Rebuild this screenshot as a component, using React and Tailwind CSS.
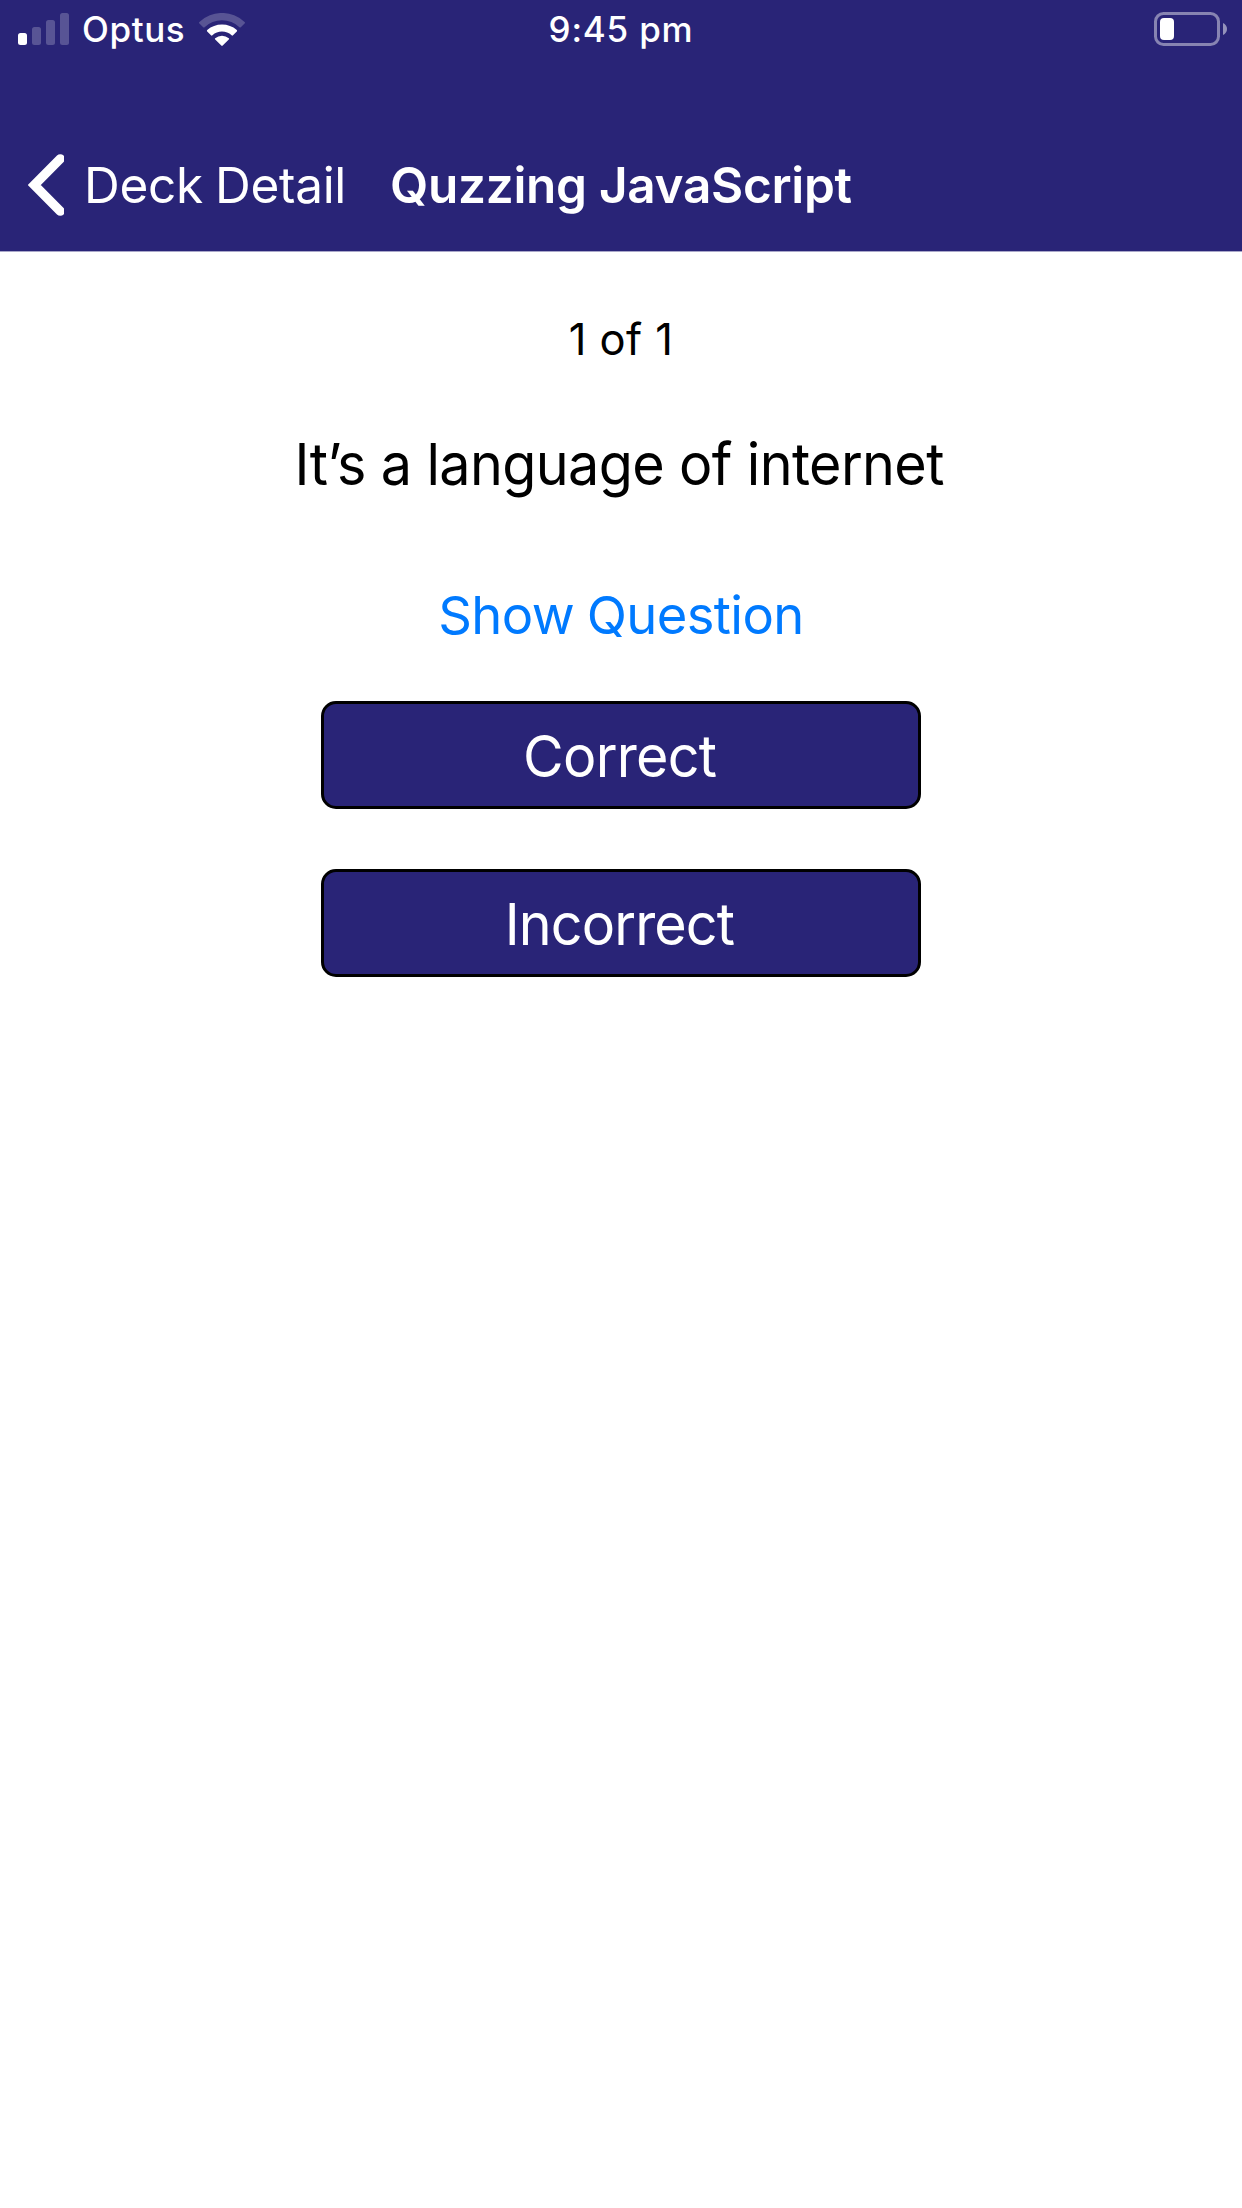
import React from "react";

function SignalIcon() {
  return (
    <svg className="h-8 w-[51px]" viewBox="0 0 51 32" fill="#fff">
      <rect x="0" y="20" width="9" height="12" rx="2.5" />
      <g opacity="0.22">
        <rect x="14" y="14" width="9" height="18" rx="2.5" />
        <rect x="28" y="7" width="9" height="25" rx="2.5" />
        <rect x="42" y="0" width="9" height="32" rx="2.5" />
      </g>
    </svg>
  );
}

function WifiIcon() {
  return (
    <svg className="h-[33px] w-[46px]" viewBox="0 0 46 33" fill="#fff">
      <path
        opacity="0.22"
        d="M0.4 10.6a1.2 1.2 0 0 1 0-1.7A33 33 0 0 1 45.6 8.9a1.2 1.2 0 0 1 0 1.7L41.8 14.2a1 1 0 0 1-1.4 0A25.5 25.5 0 0 0 5.6 14.2a1 1 0 0 1-1.4 0Z"
      />
      <path d="M8.2 18.4a1 1 0 0 1 0-1.4A22.5 22.5 0 0 1 37.8 17a1 1 0 0 1 0 1.4L34 22.3a1 1 0 0 1-1.4 0A14.2 14.2 0 0 0 13.4 22.3a1 1 0 0 1-1.4 0Z" />
      <path d="M16.2 26.5a.9 .9 0 0 1 0-1.3A10.5 10.5 0 0 1 29.8 25.2a.9 .9 0 0 1 0 1.3L23.7 32.6a1 1 0 0 1-1.4 0Z" />
    </svg>
  );
}

function BatteryIcon() {
  return (
    <svg className="h-[34px] w-[73px]" viewBox="0 0 73 34" fill="none">
      <rect x="1.5" y="1.5" width="63" height="31" rx="8" stroke="#fff" strokeOpacity="0.44" strokeWidth="3" />
      <rect x="6" y="6" width="14" height="22" rx="4" fill="#fff" />
      <path d="M69 11c2.5 1.2 4 3.3 4 6s-1.5 4.8-4 6Z" fill="#fff" fillOpacity="0.5" />
    </svg>
  );
}

function BackIcon() {
  return (
    <svg className="h-[62px] w-9" viewBox="0 0 36 62" fill="none">
      <path d="M32.3 4.8L6.3 31L32.3 57.2" stroke="#fff" strokeWidth="9.3" strokeLinecap="round" />
    </svg>
  );
}

function AnswerButton({ children }) {
  return (
    <button className="flex h-[108px] w-[600px] items-center justify-center rounded-[15px] border-[3px] border-black bg-[#292477] pt-[2px] pr-[3px] text-[58px] leading-none text-white">
      {children}
    </button>
  );
}

export default function App() {
  return (
    <div className="flex min-h-[2208px] w-[1242px] flex-col overflow-hidden bg-white font-[Inter,sans-serif] text-black">
      <header className="h-[252px] border-b border-[#a9a7c9] bg-[#292477] text-white">
        <div className="grid h-[58px] grid-cols-3 items-center text-[35px] leading-[58px] font-medium">
          <div className="flex items-center pl-[18px]">
            <SignalIcon />
            <span className="ml-[13px] tracking-[0.6px]">Optus</span>
            <span className="ml-[13.5px]">
              <WifiIcon />
            </span>
          </div>
          <div className="text-center tracking-[0.8px]">9:45 pm</div>
          <div className="flex justify-end pr-[15px]">
            <BatteryIcon />
          </div>
        </div>
        <nav className="mt-[63px] flex h-[128px] items-center pl-7 text-[49.5px] leading-none">
          <button className="flex items-center">
            <BackIcon />
            <span className="ml-5 pt-[2px] whitespace-nowrap tracking-[-0.3px] [word-spacing:-1.4px]">Deck Detail</span>
          </button>
          <h1 className="ml-[44px] pt-[2px] font-semibold whitespace-nowrap tracking-[-0.3px]">Quzzing JavaScript</h1>
        </nav>
      </header>

      <main className="flex flex-col items-center">
        <p className="mt-[59px] text-[43.5px] leading-[56px] tracking-[0.45px]">1 of 1</p>
        <p className="mt-[61px] scale-x-[0.96] pr-[4px] text-[58px] leading-[72px] tracking-[-0.65px]">
          It’s a language of internet
        </p>
        <button className="mt-[83px] text-[52.5px] leading-[64px] tracking-[-0.6px] text-[#007aff] [word-spacing:-1.5px]">
          Show Question
        </button>
        <div className="mt-[54px] flex flex-col gap-[60px]">
          <AnswerButton>
            <span className="scale-x-[0.96] tracking-[-0.76px]">Correct</span>
          </AnswerButton>
          <AnswerButton>
            <span className="scale-x-[0.96] tracking-[-0.94px]">Incorrect</span>
          </AnswerButton>
        </div>
      </main>
    </div>
  );
}
